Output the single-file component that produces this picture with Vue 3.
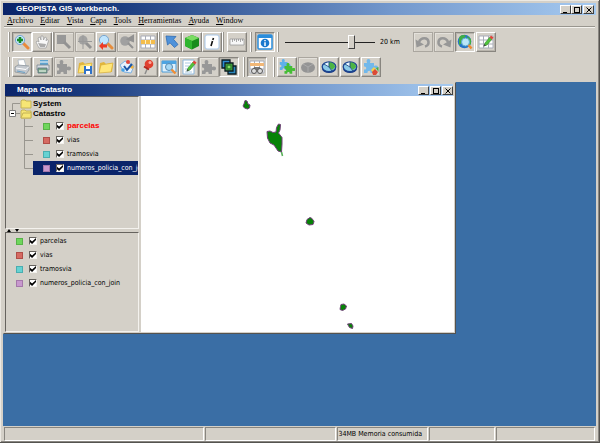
<script setup>
import { ref } from 'vue'

const lens = (a, b) =>
  `<path d="M9 9l5 5" stroke="${b}" stroke-width="3" stroke-linecap="round"/><circle cx="6" cy="6" r="4.6" fill="${a}" stroke="#7aa6cf"/>`
const puzzle = (x, y, c) =>
  `<path transform="translate(${x} ${y})" fill="${c}" d="M1 4h3c-1-3 0-4 1.500-4s2.500 1 1.500 4h4v3c3-1 4 0 4 1.500s-1 2.500-4 1.500v4H7.500c1-3-3.500-3-3 0H1v-3.500c3 .8 3-3.500 0-3z"/>`
const pie =
  '<ellipse cx="8" cy="9.500" rx="7" ry="4.500" fill="#173a86"/><ellipse cx="8" cy="7.800" rx="6.800" ry="4.800" fill="#8ccbe8" stroke="#1d4591" stroke-width="1.300"/><path d="M7.500 8L3.500 5Q6 3.300 8 3.300z" fill="#e8f6ff"/><path d="M8 8V3.300Q13.500 3.500 14.200 8L11 11z" fill="#4cb545"/><path d="M3 5l5 3 3 4M8 8V3" stroke="#17407e" fill="none" stroke-width=".8"/>'
const gridIcon =
  '<path d="M1 2h14v12H1z" fill="#fff"/><path d="M1 2h14v12H1zM5.500 2v12M10.500 2v12M1 6h14M1 10h14" fill="none" stroke="#a9adb8"/>'
const pencil =
  '<path d="M6 12l1-3 5-6 2 2-5 6z" fill="#51c43b" stroke="#2f8a2a" stroke-width=".6"/><path d="M11.500 3.500l1.500-2 2.500 2-1.500 2z" fill="#e0473b"/><path d="M5.500 12.500l1-2.500 1.500 1.500z" fill="#444"/>'
const folder = '<path d="M1 13L2 4l4-1 2 2 6-1 1 1-1 8z" fill="#e2b53a"/><path d="M1 14l2-8 12-2-2 9z" fill="#ffe67a" stroke="#d8ad35" stroke-width=".7"/>'

const icons = {
  zoomIn: lens('#c5e6fb', '#e9893a') + '<path d="M6 3v6M3 6h6" stroke="#168b29" stroke-width="2.500"/>',
  hand: '<path d="M5 14L2 8l1-1 2 1-1-4 2-1 1 3V2h2l.5 4L11 3l1.500.8-.5 3 1.500-1.300L14.500 7 12 14z" fill="#f8f8f8" stroke="#999" stroke-width=".7"/><path d="M6 13l-2-4 8 1-1 3z" fill="#aaa"/>',
  zoomArea: '<path d="M1 1h9v9H1z" fill="#989898"/><path d="M8 8l6 6" stroke="#929292" stroke-width="3"/>',
  zoomCross: '<circle cx="6" cy="6" r="4.500" fill="#a2a2a2"/><path d="M6 1v14M1 7.500h14" stroke="#999"/><path d="M9 9l5 5" stroke="#929292" stroke-width="3"/>',
  zoomBack: lens('#bfe5ff', '#e58d3c') + '<path d="M1 12l4-4v2.500h4v3H5V16z" fill="#ef3b24"/>',
  zoomGray: '<circle cx="6" cy="7" r="4.800" fill="#a0a0a0"/><path d="M9 9l5 5M9 5l5-3v5z" stroke="#929292" fill="#929292" stroke-width="2"/>',
  table: gridIcon + '<path d="M1 6h14v4H1z" fill="#f4bd4c"/><path d="M5.500 6v4M10.500 6v4" stroke="#fff0c2"/>',
  arrow: '<path d="M2 2l10 .5-2.500 2.800L14 10.500l-3.500 3L6 8.800 3.500 11z" fill="#4f92da" stroke="#2f6cb4" stroke-width=".8"/>',
  cube: '<path d="M1 4l7-3 7 3v8l-7 3.500L1 12z" fill="#178c1c"/><path d="M1 4l7-3 7 3-7 3z" fill="#79dc62"/><path d="M1 4l7 3v8.500L1 12z" fill="#2fb52f"/>',
  info: '<rect x="1" y="1" width="14" height="14" rx="2" fill="#fff" stroke="#a9c8ea"/><path d="M9.500 4L8.800 6M8.500 7L7 12" stroke="#111" stroke-width="1.600"/>',
  ruler: '<path d="M1 5h14v6H1z" fill="#f7f7f7" stroke="#999" stroke-width=".8"/><path d="M3.500 5v3M5.500 5v2M7.500 5v3M9.500 5v2M11.500 5v3M13.500 5v2" stroke="#888" stroke-width=".7"/>',
  about: '<rect x="1" y="1" width="14" height="14" rx="1" fill="#fff" stroke="#2a8ddc" stroke-width="1.500"/><path d="M1 1h14v3H1z" fill="#2a8ddc"/><circle cx="8" cy="9" r="4.300" fill="#1a79ce"/><path d="M8 6v1.300M8 8.200V12" stroke="#fff" stroke-width="1.500"/>',
  undo: '<path d="M4 8C6 3 13 3 13.500 8c.2 2.500-1.500 4-3.500 4.500" fill="none" stroke="#979797" stroke-width="2.600"/><path d="M.5 5.500l1 8 7.500-3z" fill="#979797"/>',
  redo: '<path d="M12 8C10 3 3 3 2.500 8c-.2 2.500 1.500 4 3.500 4.500" fill="none" stroke="#979797" stroke-width="2.600"/><path d="M15.500 5.500l-1 8-7.500-3z" fill="#979797"/>',
  globe: '<circle cx="7.500" cy="7.500" r="6.800" fill="#2474c8"/><path d="M2 4c2-4 6-3 7-2L6 5l-1 4-3 2zM10 2l4 3v5l-3 2z" fill="#3fae45"/><circle cx="8.500" cy="8" r="4" fill="#b9e6f8" stroke="#5ba7d0"/><path d="M11.500 11l3 3.500" stroke="#ee8c34" stroke-width="2.500"/>',
  gridEdit: gridIcon + pencil,
  printer: '<path d="M5 7L4 1l6-.5L12 7z" fill="#fff" stroke="#a5b2bf" stroke-width=".7"/><path d="M1 8l3-2 11 1v4l-3 4-11-2z" fill="#c3c8ce" stroke="#858c94" stroke-width=".7"/><path d="M2 9l10 1.500 3-3" fill="none" stroke="#fff"/><path d="M3 12l8 1.500" stroke="#6aa0c4" stroke-width="1.200"/>',
  printMap: '<path d="M5 1h8v5H5z" fill="#5da3cf"/><path d="M5 3h8" stroke="#fff"/><path d="M2 6h12v5H2z" fill="#d7dde2" stroke="#798590" stroke-width=".8"/><path d="M3 9h9v5H3z" fill="#7aa886" stroke="#5b7180" stroke-width=".8"/><path d="M4 12h7" stroke="#fff"/>',
  puzzleGray: puzzle(0, 1, '#989898'),
  folderSave: folder + '<path d="M7 7h8v8H7z" fill="#2f72c9"/><path d="M9 7h4v3H9zM9 12h4v3H9z" fill="#fff"/>',
  folder,
  check: '<path d="M1 6l5-4 9 5-3 7-7-1z" fill="#e7f2fc" stroke="#7db1e2"/><circle cx="9" cy="3" r="2" fill="#e2483b"/><circle cx="13" cy="8" r="1.800" fill="#f3b33c"/><circle cx="4" cy="11" r="1.800" fill="#47a4e8"/><path d="M5 7l3 4 5-6" fill="none" stroke="#1d56a5" stroke-width="2"/>',
  pin: '<path d="M8 8l-3 7" stroke="#8b8b8b" stroke-width="1.500"/><circle cx="9" cy="5" r="4.300" fill="#e0402f"/><circle cx="10" cy="3.500" r="1.500" fill="#ffa79b"/><path d="M4 7.500l5 3" stroke="#b32218" stroke-width="2"/>',
  winZoom: '<path d="M1 2h14v11H1z" fill="#dff1fd" stroke="#4b9bd8"/><path d="M1 2h14v3H1z" fill="#4ea4e2"/><circle cx="8" cy="8" r="3.500" fill="#a6d8f5" stroke="#5989b0"/><path d="M10.500 10.500l4 4" stroke="#ef8d35" stroke-width="2.400"/>',
  noteEdit: '<path d="M2 1h11v14H2z" fill="#fff" stroke="#8fb8dc"/><path d="M4 4h6M4 7h4M4 10h3M4 13h7" stroke="#a9c9e3"/>' + pencil,
  layers: '<g stroke="#0b1b20" stroke-width="1.300"><path d="M1 1h8v8H1z" fill="#2d8bd2"/><path d="M7 7h8v8H7z" fill="#2c87bc"/><path d="M4 4h8v8H4z" fill="#53ba48"/><path d="M6 6h4v4H6z" fill="#86df66" stroke="#2a7d2c"/></g>',
  tableFind: gridIcon + '<path d="M1 4h14v3H1z" fill="#f1b777"/><path d="M5 8h6l1 3H4z" fill="#777"/><circle cx="5" cy="12" r="2.500" fill="#ddd" stroke="#555"/><circle cx="11" cy="12" r="2.500" fill="#ddd" stroke="#555"/>',
  puzzles: '<g transform="scale(.78)">' + puzzle(0, 0, '#5fb0ea') + puzzle(6, 5, '#45bd35') + '</g>',
  pieGray: '<ellipse cx="8" cy="8.500" rx="7" ry="5.300" fill="#949494"/><path d="M3 5l5 3 5-3M8 8v5" stroke="#aaa" fill="none"/>',
  pie,
  puzzleColor: puzzle(0, 0, '#72b8ea') + '<path d="M8 11l3-3 2 2-3 4z" fill="#f3d04c"/><path d="M9 13l3-3 3 3-2 3H10z" fill="#dc4b36"/><path d="M13 9l2.500-1v5z" fill="#49ae44"/>'
}

const b = (icon, label, look = 'raised') => ({ icon, label, look })
const topGroups = [
  { id: 'nav', items: [b('zoomIn', 'Acercar', 'pressed'), b('hand', 'Mover')] },
  { id: 'zoom', spaced: true, items: [b('zoomArea', 'Zoom a selección', 'flat'), b('zoomCross', 'Zoom a punto', 'flat'), b('zoomBack', 'Zoom anterior'), b('zoomGray', 'Zoom siguiente', 'flat'), b('table', 'Ver atributos')] },
  { id: 'select', items: [b('arrow', 'Seleccionar'), b('cube', 'Ver capa'), b('info', 'Información')] },
  { id: 'measure', items: [b('ruler', 'Medir')] },
  { id: 'about', items: [b('about', 'Acerca de', 'pressed')] }
]
const historyItems = [b('undo', 'Deshacer', 'flat'), b('redo', 'Rehacer', 'flat'), b('globe', 'Ver mundo', 'pressed'), b('gridEdit', 'Editar tabla')]
const bottomGroups = [
  { id: 'file', spaced: true, items: [b('printer', 'Imprimir'), b('printMap', 'Imprimir mapa'), b('puzzleGray', 'Extensión', 'flat'), b('folderSave', 'Guardar mapa'), b('folder', 'Abrir mapa'), b('check', 'Validar'), b('pin', 'Marcar'), b('winZoom', 'Buscar en ventana')] },
  { id: 'edit', joined: true, items: [b('noteEdit', 'Editar nota'), b('puzzleGray', 'Complemento', 'flat'), b('layers', 'Capas', 'pressed')] },
  { id: 'find', items: [b('tableFind', 'Buscar en tabla', 'pressed')] },
  { id: 'plugins', spaced: true, items: [b('puzzles', 'Complementos'), b('pieGray', 'Gráfico inactivo', 'flat'), b('pie', 'Gráfico 1'), b('pie', 'Gráfico 2'), b('puzzleColor', 'Complemento de color')] }
]

const menus = ['Archivo', 'Editar', 'Vista', 'Capa', 'Tools', 'Herramientas', 'Ayuda', 'Window']
const scale = ref(76)
const layers = ref([
  { name: 'parcelas', tone: 'green', on: true, active: true },
  { name: 'vias', tone: 'red', on: true },
  { name: 'tramosvia', tone: 'cyan', on: true },
  { name: 'numeros_policia_con_join', tone: 'violet', on: true, selected: true }
])
const status = ['', '', '34MB Memoria consumida', '', '']
</script>

<template>
  <div class="app">
    <header class="titlebar">
      <h1>GEOPISTA GIS workbench.</h1>
      <div class="controls">
        <button aria-label="Minimizar"><svg viewBox="0 0 8 8"><path d="M1 6.500h4" /></svg></button>
        <button aria-label="Maximizar"><svg viewBox="0 0 8 8"><path d="M1 1.500h6M1.500 1v6M6.500 1v6M1 6.500h6" /></svg></button>
        <button class="close" aria-label="Cerrar"><svg viewBox="0 0 8 8"><path d="M1.500 1.500l5 5M6.500 1.500l-5 5" /></svg></button>
      </div>
    </header>

    <nav class="menubar">
      <button v-for="m in menus" :key="m"><u>{{ m[0] }}</u>{{ m.slice(1) }}</button>
    </nav>

    <div class="toolbar">
      <div v-for="g in topGroups" :key="g.id" class="group" :class="[g.id, { spaced: g.spaced }]">
        <button v-for="t in g.items" :key="t.label" class="tool" :class="t.look" :aria-label="t.label">
          <svg viewBox="0 0 16 16" fill="none" v-html="icons[t.icon]"></svg>
        </button>
      </div>
      <div class="group scale">
        <input id="scale" v-model="scale" type="range" min="0" max="100">
        <label for="scale">20 km</label>
      </div>
      <div class="group joined spaced history">
        <button v-for="t in historyItems" :key="t.label" class="tool" :class="t.look" :aria-label="t.label">
          <svg viewBox="0 0 16 16" fill="none" v-html="icons[t.icon]"></svg>
        </button>
      </div>
    </div>
    <div class="toolbar">
      <div v-for="g in bottomGroups" :key="g.id" class="group" :class="[g.id, { spaced: g.spaced, joined: g.joined }]">
        <button v-for="t in g.items" :key="t.label" class="tool" :class="t.look" :aria-label="t.label">
          <svg viewBox="0 0 16 16" fill="none" v-html="icons[t.icon]"></svg>
        </button>
      </div>
    </div>

    <main class="desktop">
      <section class="window">
        <header class="titlebar inner">
          <h2>Mapa Catastro</h2>
          <div class="controls">
            <button aria-label="Minimizar mapa"><svg viewBox="0 0 8 8"><path d="M1 6.500h4" /></svg></button>
            <button aria-label="Maximizar mapa"><svg viewBox="0 0 8 8"><path d="M1 1.500h6M1.500 1v6M6.500 1v6M1 6.500h6" /></svg></button>
            <button class="close" aria-label="Cerrar mapa"><svg viewBox="0 0 8 8"><path d="M1.500 1.500l5 5M6.500 1.500l-5 5" /></svg></button>
          </div>
        </header>
        <div class="body">
          <aside class="side">
            <div class="panel tree">
              <div class="folder">
                <svg class="branch" viewBox="0 0 14 10"><path d="M6.500 10V4.500H14" /></svg>
                <svg class="folder-icon" viewBox="0 0 12 10"><path d="M1 9V2l1-1h3l1 1h5v7z" /></svg>
                System
              </div>
              <div class="folder">
                <svg class="branch" viewBox="0 0 14 10"><path d="M6.500 0v2M9 4.500h5" /><path class="box" d="M3.500 1.500h6v6h-6z" /><path class="minus" d="M5 4.500h3" /></svg>
                <svg class="folder-icon" viewBox="0 0 12 10"><path d="M1 9V2l1-1h3l1 1h5v7z" /><path d="M1 9l2-5h7l1-1v6z" /></svg>
                Catastro
              </div>
              <div v-for="(l, i) in layers" :key="l.name" class="leaf">
                <svg class="branch" viewBox="0 0 27 14"><path :d="i < 3 ? 'M18.500 0v14M19 7.500h8' : 'M18.500 0v7.500H27'" /></svg>
                <label class="layer" :class="{ active: l.active, selected: l.selected }">
                  <i class="swatch" :class="l.tone"></i>
                  <input v-model="l.on" type="checkbox">
                  <span>{{ l.name }}</span>
                </label>
              </div>
            </div>
            <div class="splitter"><svg viewBox="0 0 12 3"><path d="M0 3l2-3 2 3zM8 0h4l-2 3z" /></svg></div>
            <div class="panel legend">
              <label v-for="l in layers" :key="l.name" class="layer">
                <i class="swatch" :class="l.tone"></i>
                <input v-model="l.on" type="checkbox">
                <span>{{ l.name }}</span>
              </label>
            </div>
          </aside>
          <svg class="map" viewBox="0 0 313 237" preserveAspectRatio="xMinYMin slice">
            <g fill="#078207" stroke="#704078" stroke-width="1">
              <path d="M104 4.500l2 .5 1 3 2 1-.5 3-2 1-3-1-1.500-2 1-2z" />
              <path d="M137.500 28L139.500 28.500 139 34 137.500 37 141 41.500 141 48 140.500 56 137 55 133 49 129 47 126.500 42 126 35.500 129 35 132 36.500 135 36 135.500 31.500z" />
              <path d="M169 121.500l2 1 2 3-1 3-4 .5-3-2 1-3.500z" />
              <path d="M200 208.500l3-.5 2.500 2-1 3-3 1.500-2.500-1 .5-3z" />
              <path d="M206.500 228l4-.5 1.500 2.500-.5 2.500-3-1z" />
            </g>
            <path d="M140.500 56l1 4" fill="none" stroke="#58b058" stroke-width="1.500" />
          </svg>
        </div>
      </section>
    </main>

    <footer class="status">
      <span v-for="(s, i) in status" :key="i">{{ s }}</span>
    </footer>
  </div>
</template>

<style>
body {
  margin: 0;
  background: #d4d0c8;
}
</style>

<style scoped>
.app {
  box-sizing: border-box;
  min-height: 100vh;
  display: flex;
  flex-direction: column;
  padding: 2px 2px 1px;
  border-right: 1px solid #55534f;
  border-bottom: 1px solid #55534f;
  background: #d4d0c8;
  color: #000;
  font: 7px/10px "DejaVu Sans Condensed", "Liberation Sans", sans-serif;
  box-shadow: inset 1px 1px #ece9e3, inset -1px -1px #8a8782;
}
.app * {
  box-sizing: border-box;
}
button {
  padding: 0;
  border: 0;
  background: #d4d0c8;
  color: inherit;
  font: inherit;
}
.titlebar {
  display: flex;
  align-items: center;
  justify-content: space-between;
  height: 12px;
  margin: 1px 1px 0;
  padding: 0 2px 0 13px;
  background: linear-gradient(90deg, #0a246a, #1c3d80 20%, #7297cc 65%, #a6caf0);
  color: #fff;
}
.titlebar h1,
.titlebar h2 {
  margin: 0;
  font: bold 8px/12px "Liberation Sans", sans-serif;
}
.controls {
  display: flex;
}
.controls button {
  width: 11px;
  height: 9px;
  border: 1px solid;
  border-color: #fff #404040 #404040 #fff;
  display: grid;
  place-items: center;
}
.controls .close {
  margin-left: 1px;
}
.controls svg {
  width: 8px;
  height: 8px;
  fill: none;
  stroke: #000;
}
.menubar {
  display: flex;
  gap: 7px;
  height: 12px;
  margin: 0 2px;
  padding-left: 3px;
  border-bottom: 1px solid #99968f;
  box-shadow: 0 1px #f4f2ee;
}
.menubar button {
  font: 8px/10px "Liberation Serif", serif;
}
.toolbar {
  display: flex;
  height: 20px;
  margin-top: 5px;
  padding-left: 6px;
}
.toolbar + .toolbar {
  margin-bottom: 5px;
}
.group {
  display: flex;
  align-items: center;
  padding-left: 4px;
  background: linear-gradient(90deg, #fff 1px, #96938c 1px, #96938c 2px, transparent 2px) no-repeat;
}
.spaced {
  gap: 1px;
}
.joined {
  padding-left: 0;
  background: none;
}
.zoom {
  padding-left: 2px;
}
.measure,
.about {
  padding-left: 5px;
}
.about {
  margin-left: 3px;
}
.scale {
  margin-left: 2px;
  padding-left: 8px;
}
.history {
  margin-left: 15px;
}
.find {
  margin-left: 4px;
}
.plugins {
  margin-left: 6px;
}
.tool {
  width: 20px;
  height: 20px;
  border: 1px solid;
  display: grid;
  place-items: center;
}
.tool svg {
  width: 16px;
  height: 16px;
}
.raised {
  border-color: #fff #88857f #88857f #fff;
  box-shadow: inset -1px -1px #b8b4ac;
}
.pressed {
  border-color: #88857f #fff #fff #88857f;
  box-shadow: inset 1px 1px #b8b4ac;
}
.flat {
  border-color: #aaa69f;
  box-shadow: inset 1px 1px #e4e1db;
}
#scale {
  appearance: none;
  width: 90px;
  height: 14px;
  margin: 0 5px 0 0;
  background: linear-gradient(#222, #222) center / 100% 1px no-repeat;
}
#scale::-webkit-slider-thumb {
  appearance: none;
  width: 7px;
  height: 14px;
  border: 1px solid;
  border-color: #fff #404040 #404040 #fff;
  background: #d4d0c8;
}
.scale label {
  width: 18px;
  white-space: nowrap;
}
.desktop {
  position: relative;
  flex: 1;
  min-height: 253px;
  margin: 0 1px;
  background: #3a6ea5;
}
.window {
  position: absolute;
  top: 0;
  left: 0;
  width: 453px;
  height: 252px;
  display: flex;
  flex-direction: column;
  padding: 0 1px 1px 0;
  border: 1px solid;
  border-color: #d4d0c8 #55534f #55534f #d4d0c8;
  background: #d4d0c8;
}
.inner {
  padding: 0 0 0 12px;
}
.inner .controls {
  gap: 1px;
}
.inner .close {
  margin-left: 0;
}
.body {
  display: flex;
  flex: 1;
  min-height: 0;
}
.side {
  width: 134px;
  display: flex;
  flex-direction: column;
  margin: 0 2px 0 1px;
}
.panel {
  border: 1px solid;
  border-color: #66635e #f4f2ee #f4f2ee #66635e;
  overflow: hidden;
}
.tree {
  height: 133px;
  padding-top: 2px;
}
.splitter {
  height: 3px;
  padding-left: 2px;
}
.splitter svg {
  display: block;
  width: 12px;
  height: 3px;
}
.legend {
  flex: 1;
  padding-top: 1px;
}
.folder {
  display: flex;
  height: 10px;
  font: bold 8px/10px "Liberation Sans", sans-serif;
}
.branch {
  flex: none;
  width: 14px;
  height: 10px;
  fill: none;
  stroke: #99968f;
}
.branch .box {
  fill: #fff;
  stroke: #808080;
}
.branch .minus {
  stroke: #000;
}
.folder-icon {
  width: 12px;
  height: 10px;
  margin-right: 1px;
  fill: #f7e674;
  stroke: #c4b256;
  stroke-width: 1;
}
.leaf {
  display: flex;
  height: 14px;
}
.leaf .branch {
  width: 27px;
  height: 14px;
}
.layer {
  display: flex;
  align-items: center;
  flex: 1;
  height: 14px;
  padding-left: 10px;
  white-space: nowrap;
}
.layer.active {
  color: #f00;
  font: bold 8px/10px "Liberation Sans", sans-serif;
}
.layer.selected {
  background: #0a246a;
  color: #fff;
}
.swatch {
  flex: none;
  width: 7px;
  height: 7px;
  margin-right: 6px;
  border: 1px solid;
}
.green {
  background: #6fd65c;
  border-color: #58b348;
}
.red {
  background: #d66a62;
  border-color: #b04e48;
}
.cyan {
  background: #66d2d2;
  border-color: #4aaeb0;
}
.violet {
  background: #c898ce;
  border-color: #a478aa;
}
.layer input {
  appearance: none;
  flex: none;
  width: 8px;
  height: 8px;
  margin: 0 3px 0 0;
  border: 1px solid;
  border-color: #66635e #f4f2ee #f4f2ee #66635e;
  background: #fff;
}
.layer input:checked::before {
  content: "";
  display: block;
  height: 6px;
  background: #000;
  clip-path: polygon(0 30%, 35% 60%, 100% 0, 100% 35%, 35% 100%, 0 70%);
}
.map {
  flex: 1;
  min-width: 0;
  height: 100%;
  background: #fff;
}
.status {
  display: grid;
  grid-template-columns: 200fr 132fr 91fr 66fr 99fr;
  gap: 1px;
  height: 14px;
  margin: 1px 2px 0;
}
.status span {
  min-width: 0;
  border: 1px solid;
  border-color: #88857f #fff #fff #88857f;
  line-height: 12px;
  white-space: nowrap;
}
</style>
